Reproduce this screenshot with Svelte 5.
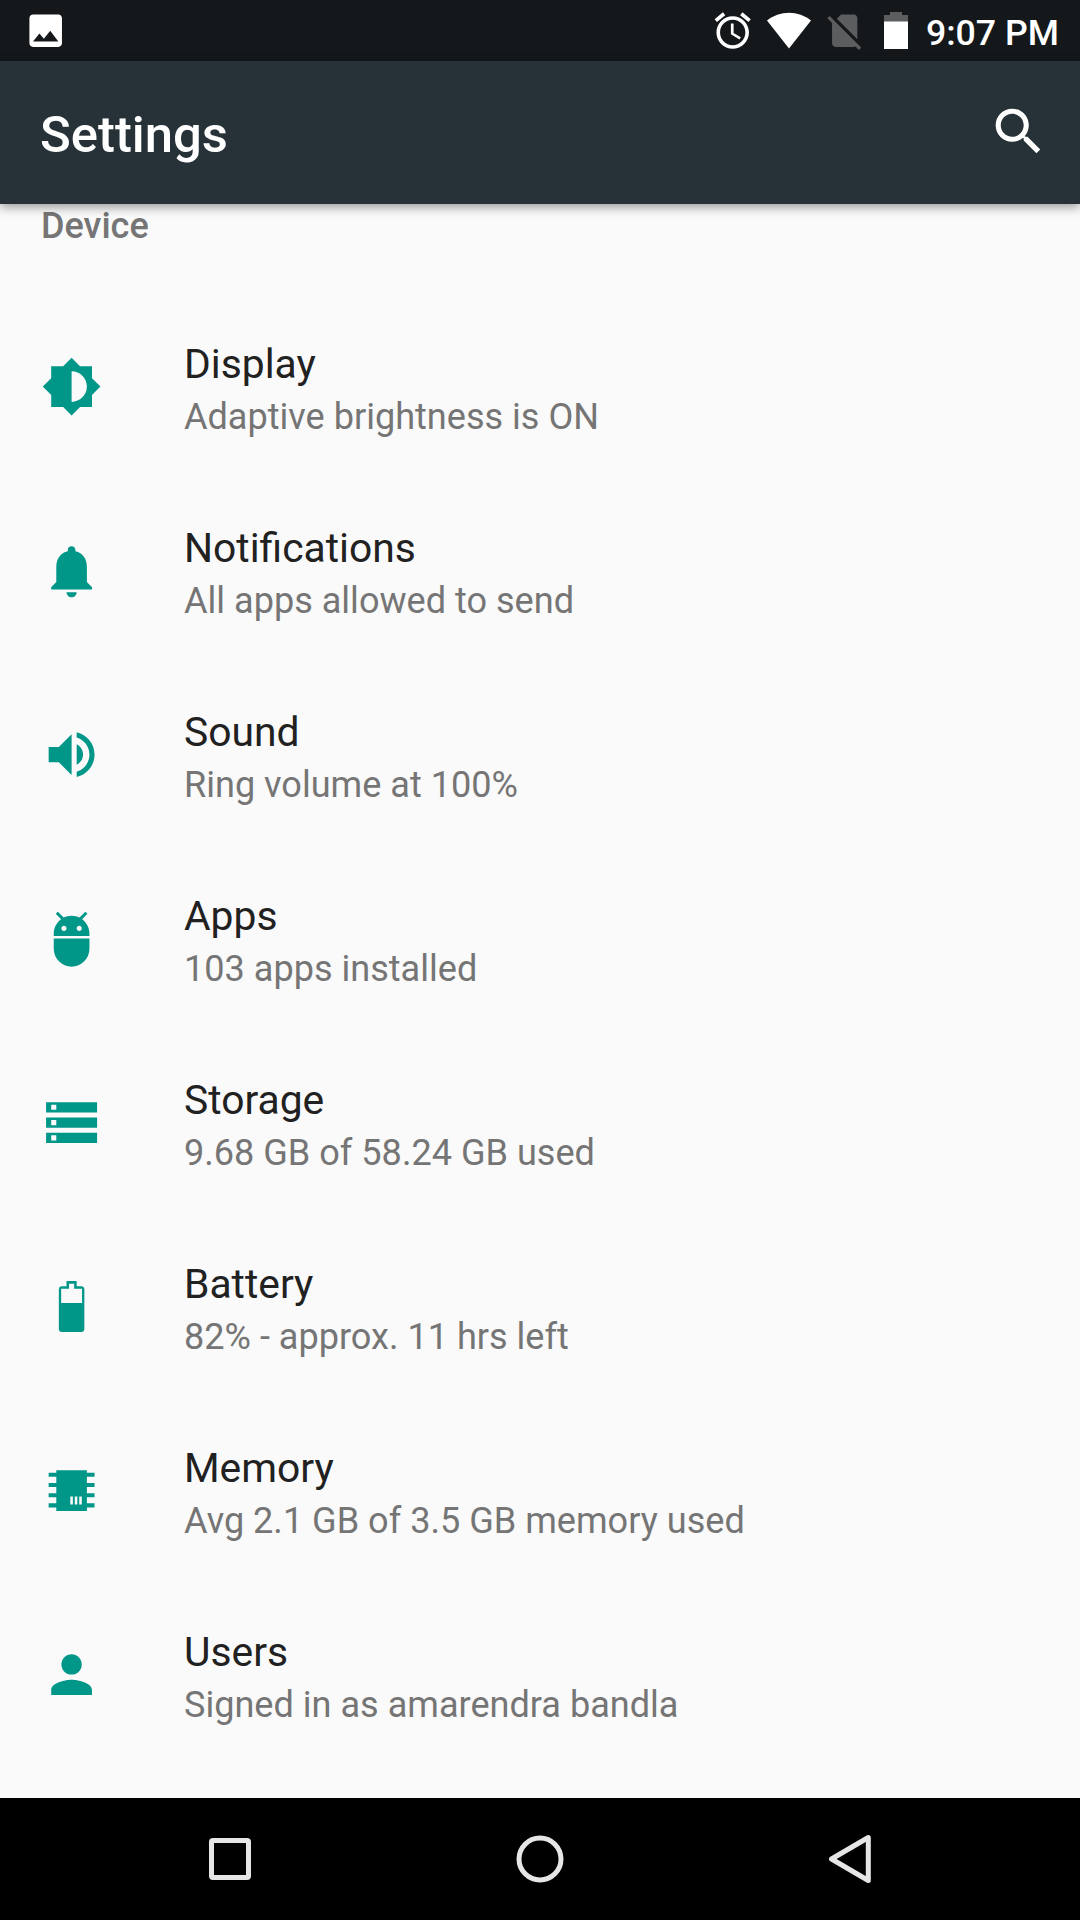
<script lang="ts">
  interface Item {
    id: string;
    title: string;
    summary: string;
    // filled with evenodd on a 24 unit grid
    icon: string;
  }

  const items: Item[] = [
    {
      id: 'display',
      title: 'Display',
      summary: 'Adaptive brightness is ON',
      icon: 'M20 15.31L23.31 12 20 8.69V4h-4.69L12 .69 8.69 4H4v4.69L.69 12 4 15.31V20h4.69L12 23.31 15.31 20H20v-4.69zM12 18V6c3.31 0 6 2.69 6 6s-2.69 6-6 6z'
    },
    {
      id: 'notifications',
      title: 'Notifications',
      summary: 'All apps allowed to send',
      icon: 'M10.01 20.5c0 1.1.89 1.99 1.99 1.99s1.99-.89 1.99-1.99h-3.98zM18 16.5v-6c0-3.07-1.63-5.4-4.5-6.08V4c0-.83-.67-1.5-1.5-1.5s-1.5.67-1.5 1.5v.42C7.63 5.1 6 7.43 6 10.5v6l-2 2v.9h16v-.9l-2-2z'
    },
    {
      id: 'sound',
      title: 'Sound',
      summary: 'Ring volume at 100%',
      icon: 'M3 9v6h4l5 5V4L7 9H3zm13.5 3c0-1.77-1.02-3.29-2.5-4.03v8.05c1.48-.73 2.5-2.25 2.5-4.02zM14 3.23v2.06c2.89.86 5 3.54 5 6.71s-2.11 5.85-5 6.71v2.06c4.01-.91 7-4.49 7-8.77s-2.99-7.86-7-8.77z'
    },
    {
      id: 'apps',
      title: 'Apps',
      summary: '103 apps installed',
      icon: 'M5 16c0 3.87 3.13 7 7 7s7-3.13 7-7v-4H5v4zM16.12 4.37l2.1-2.1-.82-.83-2.3 2.31C14.16 3.28 13.12 3 12 3s-2.16.28-3.09.75L6.6 1.44l-.82.83 2.1 2.1C6.14 5.64 5 7.68 5 10v1h14v-1c0-2.32-1.14-4.36-2.88-5.63zM9 9c-.55 0-1-.45-1-1s.45-1 1-1 1 .45 1 1-.45 1-1 1zm6 0c-.55 0-1-.45-1-1s.45-1 1-1 1 .45 1 1-.45 1-1 1z'
    },
    {
      id: 'storage',
      title: 'Storage',
      summary: '9.68 GB of 58.24 GB used',
      icon: 'M2 20h20v-4H2v4zm2-3h2v2H4v-2zM2 4v4h20V4H2zm4 3H4V5h2v2zm-4 7h20v-4H2v4zm2-3h2v2H4v-2z'
    },
    {
      id: 'battery',
      title: 'Battery',
      summary: '82% - approx. 11 hrs left',
      icon: 'M10 2h4v2h1.8c.7 0 1.2.5 1.2 1.2v15.6c0 .7-.5 1.2-1.2 1.2H8.2c-.7 0-1.2-.5-1.2-1.2V5.2C7 4.5 7.5 4 8.2 4H10zM11 3v2H7.9v5.6h8.2V5H13V3z'
    },
    {
      id: 'memory',
      title: 'Memory',
      summary: 'Avg 2.1 GB of 3.5 GB memory used',
      icon: 'M6 4h12v1h3v1.6h-3v2.4h3v1.6h-3v2.4h3v1.6h-3v2.4h3v1.6h-3v1.4H6v-1.4H3V17h3v-2.4H3V13h3v-2.4H3V9h3V6.6H3V5h3zM11.5 14.3v3.2h1v-3.2zm1.75 0v3.2h1v-3.2zm1.75 0v3.2h1v-3.2z'
    },
    {
      id: 'users',
      title: 'Users',
      summary: 'Signed in as amarendra bandla',
      icon: 'M12 12c2.21 0 4-1.79 4-4s-1.79-4-4-4-4 1.79-4 4 1.79 4 4 4zm0 2c-2.67 0-8 1.34-8 4v2h16v-2c0-2.66-5.33-4-8-4z'
    }
  ];
</script>

<div class="screen">
  <header class="status-bar">
    <svg class="status-icon" viewBox="0 0 24 24">
      <path d="M21 19V5c0-1.1-.9-2-2-2H5c-1.1 0-2 .9-2 2v14c0 1.1.9 2 2 2h14c1.1 0 2-.9 2-2zM8.5 13.5l2.5 3.01L14.5 12l4.5 6H5l3.5-4.5z" />
    </svg>
    <div class="status-right">
      <svg class="status-icon" viewBox="0 0 24 24">
        <path d="M22 5.72l-4.6-3.86-1.29 1.53 4.6 3.86L22 5.72zM7.88 3.39L6.6 1.86 2 5.71l1.29 1.53 4.59-3.85zM12.5 8H11v6l4.75 2.85.75-1.23-4-2.37V8zM12 4c-4.97 0-9 4.03-9 9s4.02 9 9 9c4.97 0 9-4.03 9-9s-4.03-9-9-9zm0 16c-3.87 0-7-3.13-7-7s3.13-7 7-7 7 3.13 7 7-3.13 7-7 7z" />
      </svg>
      <svg class="wifi" viewBox="0 0 44 37">
        <path d="M22 36.5L0 8.5C6 3.5 14 .7 22 .7s16 2.8 22 7.8z" />
      </svg>
      <svg class="status-icon no-sim" viewBox="0 0 24 24">
        <path d="M18.99 5c0-1.1-.89-2-1.99-2h-7L7.66 5.34 19 16.68 18.99 5zM3.65 3.88L2.38 5.15 5 7.77V19c0 1.1.9 2 2 2h10.01c.35 0 .67-.1.96-.26l1.88 1.88 1.27-1.27L3.65 3.88z" />
      </svg>
      <svg class="battery" viewBox="0 0 24 37">
        <path class="empty" d="M6 0h12v3h6v7H0V3h6z" />
        <path d="M0 9.5h24V37H0z" />
      </svg>
      <span class="clock">9:07 PM</span>
    </div>
  </header>

  <div class="app-bar">
    <h1>Settings</h1>
    <button class="search" aria-label="Search">
      <svg viewBox="0 0 24 24">
        <path d="M15.5 14h-.79l-.28-.27C15.41 12.59 16 11.11 16 9.5 16 5.91 13.09 3 9.5 3S3 5.91 3 9.5 5.91 16 9.5 16c1.61 0 3.09-.59 4.23-1.57l.27.28v.79l5 4.99L20.49 19l-4.99-5zm-6 0C7.01 14 5 11.99 5 9.5S7.01 5 9.5 5 14 7.01 14 9.5 11.99 14 9.5 14z" />
      </svg>
    </button>
  </div>

  <main>
    <h2>Device</h2>
    <ul>
      {#each items as item (item.id)}
        <li>
          <svg class="item-icon" viewBox="0 0 24 24">
            <path fill-rule="evenodd" d={item.icon} />
          </svg>
          <div class="item-text">
            <span class="title">{item.title}</span>
            <span class="summary">{item.summary}</span>
          </div>
        </li>
      {/each}
    </ul>
  </main>

  <nav>
    <button aria-label="Recent apps">
      <svg viewBox="0 0 60 60"><rect x="11.5" y="11.5" width="37" height="37" rx="1.5" /></svg>
    </button>
    <button aria-label="Home">
      <svg viewBox="0 0 60 60"><circle cx="30" cy="30" r="21" /></svg>
    </button>
    <button aria-label="Back">
      <svg viewBox="0 0 60 60"><path d="M48.3 8.5v43L11.5 30z" /></svg>
    </button>
  </nav>
</div>

<style>
  :global(body) {
    margin: 0;
  }

  .screen {
    display: flex;
    flex-direction: column;
    width: 1080px;
    height: 1920px;
    overflow: hidden;
    background: #fafafa;
    font-family: Roboto, sans-serif;
  }

  svg {
    display: block;
    flex: none;
  }

  button {
    display: flex;
    align-items: center;
    justify-content: center;
    padding: 0;
    border: none;
    background: none;
  }

  /* STATUS BAR */
  .status-bar {
    display: flex;
    flex: none;
    align-items: center;
    justify-content: space-between;
    box-sizing: border-box;
    height: 61px;
    padding: 0 21px 0 24px;
    background: #14181b;
    color: #fff;
    fill: #fff;
  }

  .status-icon {
    width: 43.4px;
    height: 43.4px;
  }

  .status-right {
    display: flex;
    align-items: center;
  }

  .wifi {
    width: 44px;
    height: 37px;
    margin: 0 12.5px 0 13px;
  }

  .no-sim,
  .empty {
    fill: #5b5d5f;
  }

  .battery {
    width: 24px;
    height: 37px;
    margin: 0 18px 0 17px;
  }

  .clock {
    padding-top: 5px;
    font-size: 35.7px;
    font-weight: 500;
    line-height: 56px;
  }

  /* APP BAR */
  .app-bar {
    display: flex;
    flex: none;
    align-items: center;
    justify-content: space-between;
    box-sizing: border-box;
    height: 143px;
    padding: 0 31px 0 40px;
    background: #263238;
    color: #fff;
    box-shadow: 0 3px 10px rgba(0, 0, 0, 0.4);
    z-index: 1;
  }

  h1 {
    margin: 5px 0 0;
    font-size: 50.8px;
    font-weight: 500;
    line-height: 60px;
  }

  .search svg {
    width: 61.2px;
    height: 61.2px;
    margin-bottom: 1px;
    fill: #fff;
  }

  /* LIST */
  main {
    flex: 1;
    min-height: 0;
  }

  h2 {
    height: 91px;
    margin: 0;
    padding-left: 41px;
    color: #757575;
    font-size: 36px;
    font-weight: 500;
    line-height: 44px;
  }

  ul {
    margin: 0;
    padding: 0;
    list-style: none;
  }

  li {
    display: flex;
    align-items: center;
    gap: 81.8px;
    height: 184px;
    padding-left: 41px;
  }

  .item-icon {
    width: 61.2px;
    height: 61.2px;
    fill: #009688;
  }

  .item-text {
    display: flex;
    flex-direction: column;
    padding-top: 4px;
  }

  .title {
    color: #212121;
    font-size: 40.8px;
    line-height: 57px;
  }

  .summary {
    color: #757575;
    font-size: 36.1px;
    line-height: 49px;
  }

  /* NAVIGATION BAR */
  nav {
    display: flex;
    flex: none;
    justify-content: center;
    height: 122px;
    background: #000;
  }

  nav button {
    width: 310px;
  }

  nav svg {
    width: 60px;
    height: 60px;
    fill: none;
    stroke: #e6e6e6;
    stroke-width: 5;
    stroke-linejoin: round;
  }
</style>
